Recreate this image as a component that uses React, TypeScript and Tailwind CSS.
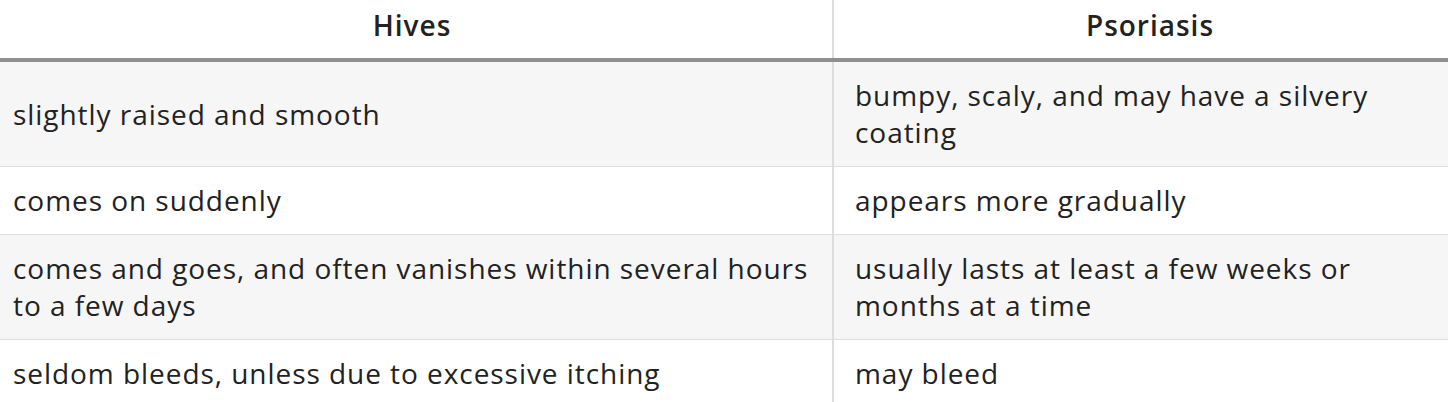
import React from "react";

const rows: { a: React.ReactNode; b: React.ReactNode; shade: boolean }[] = [
  { a: "slightly raised and smooth", b: <>bumpy, scaly, and may have a silvery<br />coating</>, shade: true },
  { a: "comes on suddenly", b: "appears more gradually", shade: false },
  { a: <>comes and goes, and often vanishes within several hours<br />to a few days</>, b: <>usually lasts at least a few weeks or<br />months at a time</>, shade: true },
  { a: "seldom bleeds, unless due to excessive itching", b: "may bleed", shade: false },
];

export default function App() {
  return (
    <div
      className="w-[1448px] h-[402px] overflow-hidden bg-white text-[#222222]"
      style={{ fontFamily: '"Open Sans", "Liberation Sans", sans-serif' }}
    >
      <div className="ml-[-8px] w-[1474px]">
        <div className="flex h-[62px] border-b-4 border-[#8f8f8f] bg-white">
          <div className="w-[842px] border-r-2 border-[#dddddd] flex items-center justify-center pb-[8px] text-[28px] font-semibold leading-[37px] tracking-[1px]">
            Hives
          </div>
          <div className="flex-1 flex items-center justify-center pb-[8px] text-[28px] font-semibold leading-[37px] tracking-[1px]">
            Psoriasis
          </div>
        </div>
        {rows.map((r, i) => (
          <div
            key={i}
            className={`flex border-b border-[#dddddd] ${r.shade ? "bg-[#f6f6f6]" : "bg-white"}`}
          >
            <div className="w-[842px] border-r-2 border-[#dddddd] px-[21px] py-[15px] flex items-center text-[28px] leading-[37px] tracking-[0.95px] whitespace-nowrap">
              <span>{r.a}</span>
            </div>
            <div className="flex-1 px-[21px] py-[15px] flex items-center text-[28px] leading-[37px] tracking-[0.95px] whitespace-nowrap">
              <span>{r.b}</span>
            </div>
          </div>
        ))}
      </div>
    </div>
  );
}
